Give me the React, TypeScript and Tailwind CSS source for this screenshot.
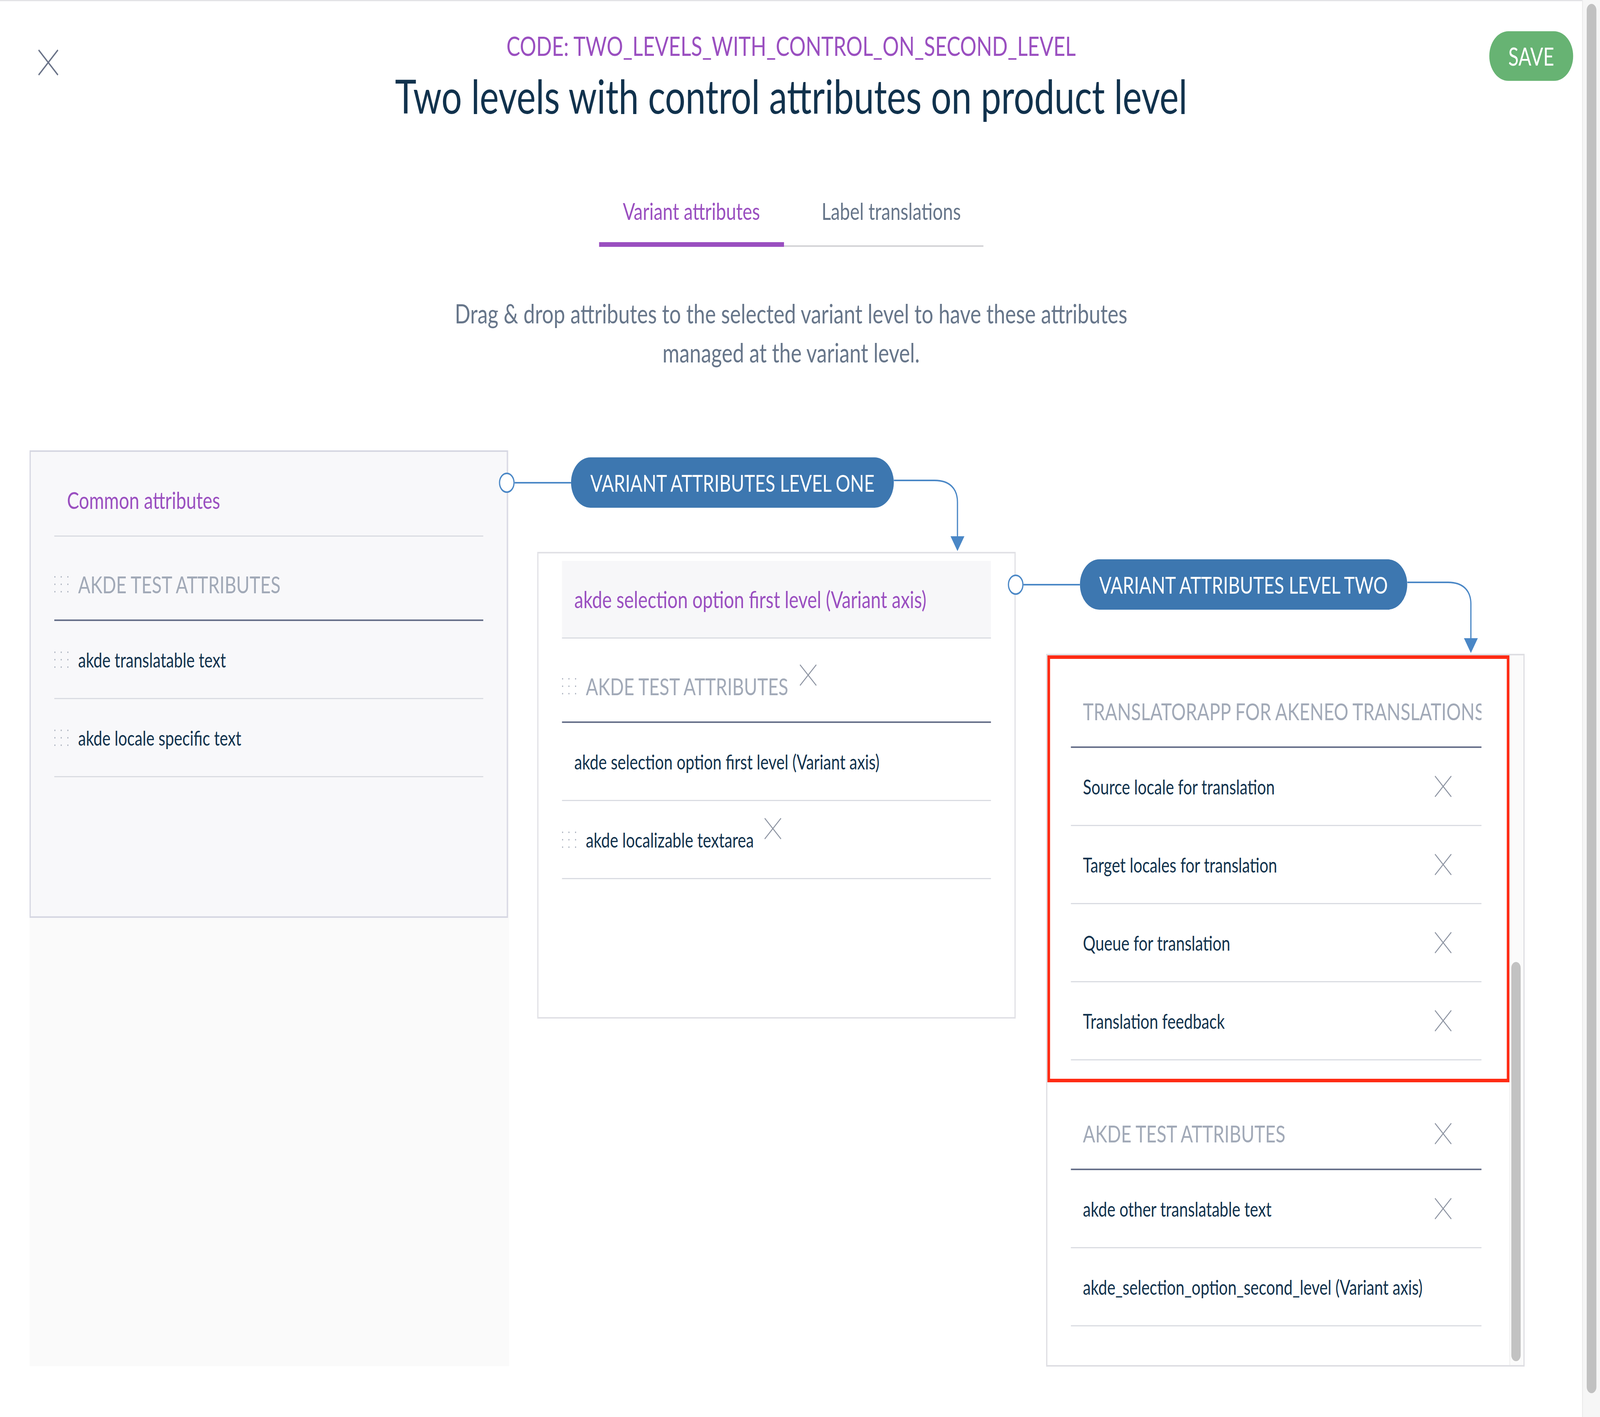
import React from "react";

const DARK = "text-[#11324d]";

function XIcon({ className = "" }: { className?: string }) {
  return (
    <svg viewBox="0 0 60 57" className={`w-[60px] h-[57px] shrink-0 ${className}`}>
      <path d="M3 2 L57 55 M57 2 L3 55" stroke="#8d94a2" strokeWidth="3" fill="none" />
    </svg>
  );
}

function Grip() {
  return (
    <div className="grid grid-cols-3 gap-x-[17px] gap-y-[15px] w-[47px] shrink-0">
      {Array.from({ length: 9 }).map((_, i) => (
        <span key={i} className="w-[4px] h-[4px] rounded-full bg-[#a9b0bd]" />
      ))}
    </div>
  );
}

function LevelHeader({ label }: { label: string }) {
  return (
    <div className="-ml-[127px] h-[242px] flex items-start">
      <div className="h-[129px] flex items-center">
        <div className="w-[52px] h-[52px] rounded-full border-[4px] border-[#4a87c6] bg-white" />
        <div className="w-[187px] h-[4px] bg-[#4a87c6]" />
      </div>
      <div className="h-[129px] rounded-full bg-[#3d77b0] px-[64px] flex items-center text-white text-[60px] leading-none uppercase whitespace-nowrap">
        {label}
      </div>
      <svg viewBox="0 0 240 242" className="w-[240px] h-[242px] shrink-0">
        <path d="M0 59 H135 C185 59 211 80 211 115 V205" stroke="#4a87c6" strokeWidth="4" fill="none" />
        <polygon points="188,202 234,202 211,240" fill="#4a87c6" />
      </svg>
    </div>
  );
}

function GroupRow({ label, remove }: { label: string; remove?: boolean }) {
  return (
    <div className="h-[216px] pt-[32px] flex items-center border-b-[4px] border-[#67708a]">
      <Grip />
      <span className="ml-[32px] text-[60px] leading-[72px] text-[#a1a9b7] uppercase whitespace-nowrap">{label}</span>
      {remove ? <XIcon className="ml-[36px] mb-[57px]" /> : null}
    </div>
  );
}

function ItemRow({ label, grip, remove }: { label: string; grip?: boolean; remove?: boolean }) {
  return (
    <div className="h-[200px] flex items-center border-b-[3px] border-[#dadce2]">
      {grip ? <Grip /> : null}
      <span className={`${grip ? "ml-[32px]" : "ml-[41px]"} text-[52px] leading-[64px] ${DARK} whitespace-nowrap`}>{label}</span>
      {remove ? <XIcon className="ml-[33px] mb-[57px]" /> : null}
    </div>
  );
}

function RightRow({ label, remove = true }: { label: string; remove?: boolean }) {
  return (
    <div className="h-[200px] flex items-center justify-between pl-[40px] pr-[97px] border-b-[3px] border-[#dadce2]">
      <span className={`text-[52px] leading-[64px] ${DARK} whitespace-nowrap`}>{label}</span>
      {remove ? <XIcon /> : null}
    </div>
  );
}

export default function App() {
  // the window may be narrower than the 5304px design; squeeze it to fit
  const fit = typeof window !== "undefined" ? Math.min(1, window.innerWidth / 5304) : 1;

  return (
    <div className="w-screen h-[3628px] overflow-hidden bg-white">
      <div
        className="w-[5304px] h-[3628px] flex bg-white font-['Lato','Noto_Sans',sans-serif]"
        style={{ transform: `scaleX(${fit})`, transformOrigin: "0 0" }}
      >
        <main className="w-[5245px] h-full border-t-[3px] border-[#e3e3e6]">
          {/* header */}
          <header className="grid grid-cols-[1fr_auto_1fr] items-start">
            <div className="pl-[125px] pt-[122px]">
              <svg viewBox="0 0 70 70" className="w-[70px] h-[70px]">
                <path d="M3 3 L67 67 M67 3 L3 67" stroke="#6b7489" strokeWidth="4" fill="none" />
              </svg>
            </div>
            <div className="flex flex-col items-center pt-[80px]">
              <div className="text-[68px] leading-[68px] text-[#9a4fc0] whitespace-nowrap">
                CODE: TWO_LEVELS_WITH_CONTROL_ON_SECOND_LEVEL
              </div>
              <h1 className={`mt-[34px] text-[120px] leading-[120px] ${DARK} whitespace-nowrap`}>
                Two levels with control attributes on product level
              </h1>
            </div>
            <div className="flex justify-end pr-[30px] pt-[77px]">
              <button className="w-[278px] h-[127px] rounded-full bg-[#67b373] text-white text-[63px] leading-none">
                SAVE
              </button>
            </div>
          </header>

          {/* tabs */}
          <div className="mt-[205px] flex justify-center items-end">
            <div className="w-[613px] pb-[50px] border-b-[12px] border-[#9a4fc0] text-center text-[60px] leading-[60px] text-[#9a4fc0]">
              Variant attributes
            </div>
            <div className="w-[661px] pl-[125px] pb-[58px] border-b-[4px] border-[#d3d3d6] text-[60px] leading-[60px] text-[#67768a]">
              Label translations
            </div>
          </div>

          <p className="mt-[120px] text-center text-[68px] leading-[100px] text-[#67768a]">
            Drag &amp; drop attributes to the selected variant level to have these attributes
            <br />
            managed at the variant level.
          </p>

          {/* diagram */}
          <div className="mt-[201px] pl-[98px] flex items-start">
            {/* common attributes */}
            <div className="w-[1590px] h-[2345px] bg-[#fafafa] shrink-0">
              <div className="w-[1586px] h-[1197px] border-[4px] border-[#d6d7e2] bg-[#f8f8fa] px-[78px]">
                <div className="h-[217px] pt-[87px] pl-[42px] border-b-[3px] border-[#d9dbe1] text-[60px] leading-[72px] text-[#9a4fc0]">
                  Common attributes
                </div>
                <GroupRow label="AKDE TEST ATTRIBUTES" />
                <ItemRow label="akde translatable text" grip />
                <ItemRow label="akde locale specific text" grip />
              </div>
            </div>

            {/* level one */}
            <div className="ml-[93px] mt-[18px] w-[1586px] shrink-0">
              <LevelHeader label="Variant attributes level one" />
              <div className="h-[1195px] border-[4px] border-[#e1e1e6] bg-white pt-[19px] px-[78px]">
                <div className="h-[199px] bg-[#f7f7f9] flex items-center pl-[41px] border-b-[3px] border-[#dadce2] text-[60px] leading-[72px] text-[#9a4fc0] whitespace-nowrap">
                  akde selection option first level (Variant axis)
                </div>
                <GroupRow label="AKDE TEST ATTRIBUTES" remove />
                <ItemRow label="akde selection option first level (Variant axis)" />
                <ItemRow label="akde localizable textarea" grip remove />
              </div>
            </div>

            {/* level two */}
            <div className="ml-[101px] mt-[279px] w-[1586px] shrink-0">
              <LevelHeader label="Variant attributes level two" />
              <div className="h-[1825px] border-[4px] border-[#dedee3] bg-white flex overflow-hidden">
                <div className="flex-1 overflow-hidden">
                  <div className="border-[9px] border-[#ff2b14] pt-[12px] pb-[47px] pl-[69px] pr-[84px]">
                    <div className="h-[216px] pt-[32px] flex items-center border-b-[4px] border-[#67708a] overflow-hidden">
                      <span className="ml-[40px] text-[60px] leading-[72px] text-[#a1a9b7] uppercase whitespace-nowrap">
                        TRANSLATORAPP FOR AKENEO TRANSLATIONS
                      </span>
                    </div>
                    <RightRow label="Source locale for translation" />
                    <RightRow label="Target locales for translation" />
                    <RightRow label="Queue for translation" />
                    <RightRow label="Translation feedback" />
                  </div>
                  <div className="border-[9px] border-transparent pl-[69px] pr-[84px]">
                    <div className="h-[216px] pt-[32px] flex items-center justify-between pr-[97px] border-b-[4px] border-[#67708a]">
                      <span className="ml-[40px] text-[60px] leading-[72px] text-[#a1a9b7] uppercase whitespace-nowrap">
                        AKDE TEST ATTRIBUTES
                      </span>
                      <XIcon />
                    </div>
                    <RightRow label="akde other translatable text" />
                    <RightRow label="akde_selection_option_second_level (Variant axis)" remove={false} />
                  </div>
                </div>
                <div className="w-[46px] shrink-0 bg-[#fbfbfb] border-l-[2px] border-[#ececec] flex flex-col justify-end pb-[10px]">
                  <div className="ml-[4px] w-[31px] h-[1022px] rounded-full bg-[#c2c2c2]" />
                </div>
              </div>
            </div>
          </div>
        </main>

        {/* page scrollbar */}
        <div className="w-[59px] h-full bg-[#f6f6f6] border-l-[2px] border-[#e6e6e6] pt-[10px]">
          <div className="ml-[13px] w-[32px] h-[3557px] rounded-full bg-[#c1c1c1]" />
        </div>
      </div>
    </div>
  );
}
